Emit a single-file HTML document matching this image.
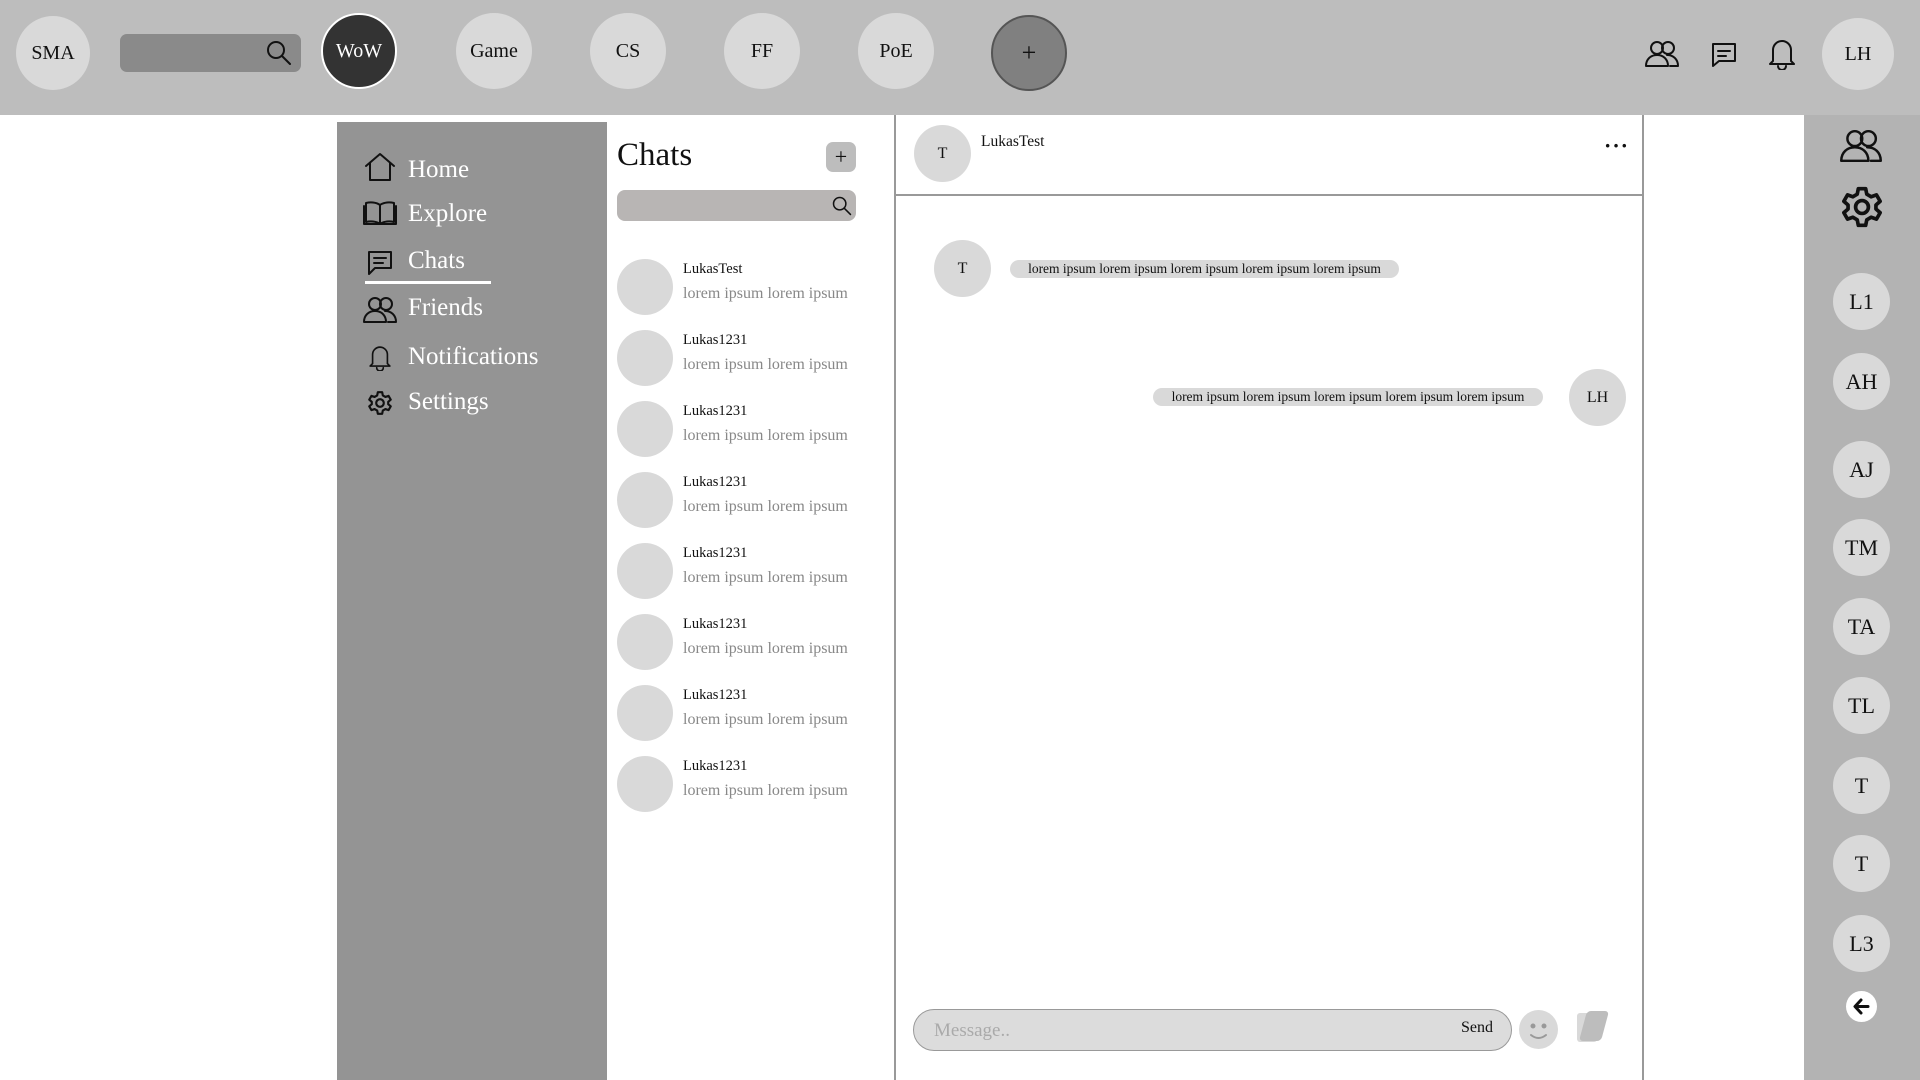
<!DOCTYPE html><html><head><style>
*{margin:0;padding:0;box-sizing:border-box}
body{width:1920px;height:1080px;position:relative;overflow:hidden;background:#fff;font-family:"Liberation Serif",serif;color:#111}
.a{position:absolute}
.c{position:absolute;border-radius:50%;background:#d9d9d9;display:flex;align-items:center;justify-content:center;color:#111}
svg{position:absolute;fill:none;stroke:#111;stroke-width:2;stroke-linecap:round;stroke-linejoin:round}
.nav{position:absolute;left:408px;color:#fff;font-size:25px}
.nm{position:absolute;left:683px;font-size:14.5px}
.pv{position:absolute;left:683px;font-size:16px;color:#888}
</style></head><body>
<div class="a" style="left:0;top:0;width:1920px;height:115px;background:#bdbdbd"></div>
<div class="c" style="left:16px;top:16px;width:74px;height:74px;font-size:20px">SMA</div>
<div class="a" style="left:120px;top:34px;width:181px;height:38px;background:#8a8a8a;border-radius:7px"></div>
<svg style="left:266px;top:40px" width="26" height="26" viewBox="0 0 26 26"><circle cx="10" cy="10" r="8"/><path d="M16 16l8 8"/></svg>
<div class="c" style="left:321px;top:13px;width:76px;height:76px;background:#333;color:#fff;border:2px solid #fff;font-size:20px">WoW</div>
<div class="c" style="left:456px;top:13px;width:76px;height:76px;font-size:20px">Game</div>
<div class="c" style="left:590px;top:13px;width:76px;height:76px;font-size:20px">CS</div>
<div class="c" style="left:724px;top:13px;width:76px;height:76px;font-size:20px">FF</div>
<div class="c" style="left:858px;top:13px;width:76px;height:76px;font-size:20px">PoE</div>
<div class="c" style="left:991px;top:15px;width:76px;height:76px;background:#808080;border:2px solid #555;font-size:26px">+</div>
<svg style="left:1645px;top:40px" width="34" height="28" viewBox="0 0 34 28"><circle cx="12" cy="8" r="6"/><path d="M1 26c0-7 5-11 11-11s11 4 11 11z"/><circle cx="23" cy="8" r="6"/><path d="M22 15c6 0 11 4 11 11h-8"/></svg>
<svg style="left:1710px;top:41px" width="28" height="28" viewBox="0 0 28 28"><path d="M3 3h22v17H9l-6 5z"/><path d="M8 10h12M8 15h8"/></svg>
<svg style="left:1767px;top:36px" width="30" height="34" viewBox="0 0 30 34"><path d="M6 25V14a9 9 0 0 1 18 0v11l3 3H3z"/><path d="M11 30a4 4 0 0 0 8 0"/></svg>
<div class="c" style="left:1822px;top:18px;width:72px;height:72px;font-size:20px">LH</div>

<div class="a" style="left:337px;top:122px;width:270px;height:958px;background:#949494"></div>
<svg style="left:364px;top:152px" width="32" height="30" viewBox="0 0 32 30"><path d="M2 14L16 2l14 12M6 11v17h20V11"/></svg>
<div class="nav" style="top:156px">Home</div>
<svg style="left:363px;top:201px" width="34" height="24" viewBox="0 0 34 24"><path d="M17 4c-4-3-10-3-14-2v19c4-1 10-1 14 2 4-3 10-3 14-2V2c-4-1-10-1-14 2zM17 4v19"/><path d="M1 5v18h32V5"/></svg>
<div class="nav" style="top:200px">Explore</div>
<svg style="left:367px;top:250px" width="26" height="26" viewBox="0 0 26 26"><path d="M2 2h22v16H8l-6 6z"/><path d="M7 8h12M7 13h9"/></svg>
<div class="nav" style="top:247px">Chats</div>
<div class="a" style="left:365px;top:281px;width:126px;height:3px;background:#fff"></div>
<svg style="left:363px;top:296px" width="34" height="28" viewBox="0 0 34 28"><circle cx="12" cy="8" r="6"/><path d="M1 26c0-7 5-11 11-11s11 4 11 11z"/><circle cx="23" cy="8" r="6"/><path d="M22 15c6 0 11 4 11 11h-8"/></svg>
<div class="nav" style="top:294px">Friends</div>
<svg style="left:367px;top:343px" width="26" height="28" viewBox="0 0 30 34"><path d="M6 25V14a9 9 0 0 1 18 0v11l3 3H3z"/><path d="M11 30a4 4 0 0 0 8 0"/></svg>
<div class="nav" style="top:343px">Notifications</div>
<svg style="left:367px;top:390px" width="26" height="26" viewBox="0 0 24 24"><circle cx="12" cy="12" r="3.5"/><path d="M10 2h4l.6 3 2.4 1.4 2.9-1 2 3.5-2.3 2v2.2l2.3 2-2 3.5-2.9-1-2.4 1.4L14 22h-4l-.6-3-2.4-1.4-2.9 1-2-3.5 2.3-2v-2.2L2.1 8.9l2-3.5 2.9 1L9.4 5z"/></svg>
<div class="nav" style="top:388px">Settings</div>

<div class="a" style="left:617px;top:137px;font-size:33px">Chats</div>
<div class="c" style="left:826px;top:142px;width:30px;height:30px;border-radius:7px;background:#bdbdbd;font-size:22px">+</div>
<div class="a" style="left:617px;top:190px;width:239px;height:31px;background:#b8b5b4;border-radius:8px"></div>
<svg style="left:832px;top:196px" width="20" height="20" viewBox="0 0 26 26"><circle cx="10" cy="10" r="8"/><path d="M16 16l8 8"/></svg>

<div class="c" style="left:617px;top:259px;width:56px;height:56px"></div><div class="nm" style="top:261px">LukasTest</div><div class="pv" style="top:285px">lorem ipsum lorem ipsum</div>
<div class="c" style="left:617px;top:330px;width:56px;height:56px"></div><div class="nm" style="top:332px">Lukas1231</div><div class="pv" style="top:356px">lorem ipsum lorem ipsum</div>
<div class="c" style="left:617px;top:401px;width:56px;height:56px"></div><div class="nm" style="top:403px">Lukas1231</div><div class="pv" style="top:427px">lorem ipsum lorem ipsum</div>
<div class="c" style="left:617px;top:472px;width:56px;height:56px"></div><div class="nm" style="top:474px">Lukas1231</div><div class="pv" style="top:498px">lorem ipsum lorem ipsum</div>
<div class="c" style="left:617px;top:543px;width:56px;height:56px"></div><div class="nm" style="top:545px">Lukas1231</div><div class="pv" style="top:569px">lorem ipsum lorem ipsum</div>
<div class="c" style="left:617px;top:614px;width:56px;height:56px"></div><div class="nm" style="top:616px">Lukas1231</div><div class="pv" style="top:640px">lorem ipsum lorem ipsum</div>
<div class="c" style="left:617px;top:685px;width:56px;height:56px"></div><div class="nm" style="top:687px">Lukas1231</div><div class="pv" style="top:711px">lorem ipsum lorem ipsum</div>
<div class="c" style="left:617px;top:756px;width:56px;height:56px"></div><div class="nm" style="top:758px">Lukas1231</div><div class="pv" style="top:782px">lorem ipsum lorem ipsum</div>

<div class="a" style="left:894px;top:115px;width:2px;height:965px;background:#999"></div>
<div class="a" style="left:1642px;top:115px;width:2px;height:965px;background:#999"></div>
<div class="a" style="left:896px;top:194px;width:746px;height:2px;background:#999"></div>
<div class="c" style="left:914px;top:125px;width:57px;height:57px;font-size:16px">T</div>
<div class="a" style="left:981px;top:133px;font-size:15.5px">LukasTest</div>
<div class="a" style="left:1604px;top:133px;font-size:22px;letter-spacing:1px;font-weight:bold">···</div>
<div class="c" style="left:934px;top:240px;width:57px;height:57px;font-size:16px">T</div>
<div class="a" style="left:1010px;top:260px;width:389px;height:18px;background:#d9d9d9;border-radius:9px;font-size:13.5px;text-align:center;line-height:18px">lorem ipsum lorem ipsum lorem ipsum lorem ipsum lorem ipsum</div>
<div class="a" style="left:1153px;top:388px;width:390px;height:18px;background:#d9d9d9;border-radius:9px;font-size:13.5px;text-align:center;line-height:18px">lorem ipsum lorem ipsum lorem ipsum lorem ipsum lorem ipsum</div>
<div class="c" style="left:1569px;top:369px;width:57px;height:57px;font-size:16px">LH</div>
<div class="a" style="left:913px;top:1009px;width:599px;height:42px;background:#dcdcdc;border:1.5px solid #999;border-radius:21px"></div>
<div class="a" style="left:934px;top:1020px;font-size:19px;color:#aaa">Message..</div>
<div class="a" style="left:1461px;top:1019px;font-size:16px">Send</div>
<div class="c" style="left:1519px;top:1010px;width:39px;height:39px"></div>
<svg style="left:1519px;top:1010px;stroke:#999" width="39" height="39" viewBox="0 0 39 39"><circle cx="14" cy="16" r="1.5" fill="#999"/><circle cx="25" cy="16" r="1.5" fill="#999"/><path d="M12 25q7.5 6 15 0"/></svg>
<div class="a" style="left:1577px;top:1013px;width:20px;height:29px;background:#d9d9d9;border-radius:3px"></div>
<div class="a" style="left:1583px;top:1011px;width:22px;height:30px;background:#bdbdbd;border-radius:4px;transform:skewX(-15deg)"></div>

<div class="a" style="left:1804px;top:115px;width:116px;height:965px;background:#b3b3b3"></div>
<svg style="left:1840px;top:128px" width="42" height="36" viewBox="0 0 34 28"><circle cx="12" cy="8" r="6"/><path d="M1 26c0-7 5-11 11-11s11 4 11 11z"/><circle cx="23" cy="8" r="6"/><path d="M22 15c6 0 11 4 11 11h-8"/></svg>
<svg style="left:1840px;top:185px" width="44" height="44" viewBox="0 0 24 24" stroke-width="1.6"><circle cx="12" cy="12" r="3.5"/><path d="M10 2h4l.6 3 2.4 1.4 2.9-1 2 3.5-2.3 2v2.2l2.3 2-2 3.5-2.9-1-2.4 1.4L14 22h-4l-.6-3-2.4-1.4-2.9 1-2-3.5 2.3-2v-2.2L2.1 8.9l2-3.5 2.9 1L9.4 5z"/></svg>
<div class="c" style="left:1833px;top:273px;width:57px;height:57px;font-size:22px">L1</div>
<div class="c" style="left:1833px;top:353px;width:57px;height:57px;font-size:22px">AH</div>
<div class="c" style="left:1833px;top:441px;width:57px;height:57px;font-size:22px">AJ</div>
<div class="c" style="left:1833px;top:519px;width:57px;height:57px;font-size:22px">TM</div>
<div class="c" style="left:1833px;top:598px;width:57px;height:57px;font-size:22px">TA</div>
<div class="c" style="left:1833px;top:677px;width:57px;height:57px;font-size:22px">TL</div>
<div class="c" style="left:1833px;top:757px;width:57px;height:57px;font-size:22px">T</div>
<div class="c" style="left:1833px;top:835px;width:57px;height:57px;font-size:22px">T</div>
<div class="c" style="left:1833px;top:915px;width:57px;height:57px;font-size:22px">L3</div>
<div class="c" style="left:1846px;top:991px;width:31px;height:31px;background:#fff"></div>
<svg style="left:1851px;top:996px;stroke-width:3" width="21" height="21" viewBox="0 0 21 21"><path d="M17 10.5H5M10 4l-6 6.5 6 6.5"/></svg>
</body></html>
